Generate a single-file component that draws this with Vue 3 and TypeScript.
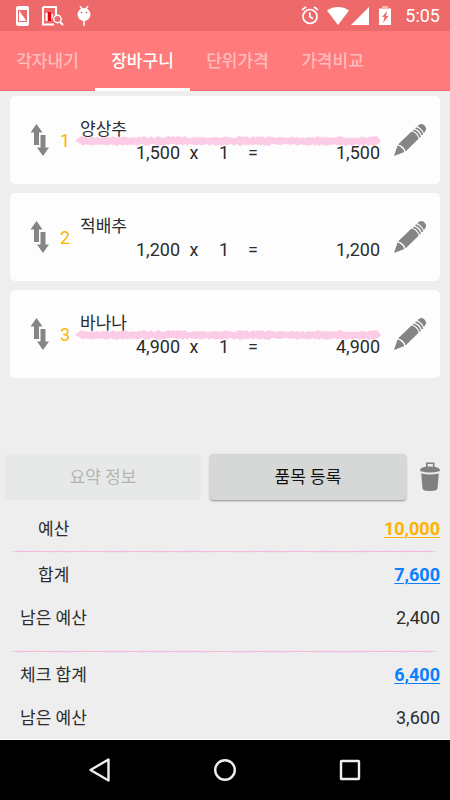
<script setup lang="ts">
import { computed, ref } from 'vue'

interface Item {
  name: string
  price: number
  quantity: number
  checked: boolean
}

interface SummaryRow {
  label: string
  amount: number
  tone?: 'budget' | 'total'
  indented?: boolean
}

const tabs: string[] = ['각자내기', '장바구니', '단위가격', '가격비교']
const activeTab = ref('장바구니')

const items = ref<Item[]>([
  { name: '양상추', price: 1500, quantity: 1, checked: true },
  { name: '적배추', price: 1200, quantity: 1, checked: false },
  { name: '바나나', price: 4900, quantity: 1, checked: true },
])

const budget = 10000
const sum = (list: Item[]): number => list.reduce((acc, i) => acc + i.price * i.quantity, 0)
const total = computed(() => sum(items.value))
const checkedTotal = computed(() => sum(items.value.filter((i) => i.checked)))

const groups = computed<SummaryRow[][]>(() => [
  [{ label: '예산', amount: budget, tone: 'budget', indented: true }],
  [
    { label: '합계', amount: total.value, tone: 'total', indented: true },
    { label: '남은 예산', amount: budget - total.value },
  ],
  [
    { label: '체크 합계', amount: checkedTotal.value, tone: 'total' },
    { label: '남은 예산', amount: budget - checkedTotal.value },
  ],
])

const format = (n: number): string => n.toLocaleString('en-US')

// Ragged outline of a crayon stroke, built from a repeatable pseudo-random sequence.
function crayonPath(length: number, top: number, bottom: number, rough: number, step: number): string {
  let seed = 7
  const next = (): number => {
    seed = (seed * 16807) % 2147483647
    return seed / 2147483647
  }
  const middle = (top + bottom) / 2
  const upper: string[] = []
  const lower: string[] = []
  for (let x = 6; x < length - 2; x += step) {
    upper.push(`${x} ${(top + next() * rough).toFixed(1)}`)
    lower.unshift(`${x} ${(bottom - next() * rough).toFixed(1)}`)
  }
  return `M0 ${middle}L${upper.join('L')}L${length} ${middle}L${lower.join('L')}Z`
}

const strike = crayonPath(306, 0, 10, 2.2, 1.5)
const rule = crayonPath(426, 0.7, 2.3, 0.3, 6)
</script>

<template>
  <div class="screen">
    <header class="status">
      <div class="status-group">
        <svg class="ico-phone" width="13" height="20" viewBox="0 0 13 20" aria-hidden="true">
          <rect width="13" height="20" rx="2" fill="#fff" />
          <rect x="2" y="4" width="9" height="12" fill="#ee6a6a" />
          <path d="M3 4.500V15h7.500Z" fill="#fff" />
        </svg>
        <svg class="ico-chart" width="22" height="20" viewBox="0 0 22 20" aria-hidden="true">
          <path d="M1 1h13v9M12 18.500H1V1" fill="none" stroke="#fff" stroke-width="2" />
          <path d="M3.500 7h2v8h-2zM9.500 8h1.500v3l-1.500 3z" fill="#fff" />
          <path d="M6 6h3v9H6z" fill="#e60012" />
          <circle cx="15.500" cy="13" r="3.700" fill="#ee6a6a" stroke="#fff" stroke-width="1.400" />
          <path d="m18 16 3 3" stroke="#fff" stroke-width="2" />
        </svg>
        <svg class="ico-droid" width="14" height="20" viewBox="0 0 14 20" aria-hidden="true">
          <path d="M3 0l2 3M11 0 9 3M7 14v6" stroke="#fff" stroke-width="1.500" />
          <circle cx="7" cy="8.500" r="6.500" fill="#fff" />
          <circle cx="4.500" cy="6.500" r="0.800" fill="#c44" />
          <circle cx="9.500" cy="6.500" r="0.800" fill="#c44" />
        </svg>
      </div>
      <div class="status-group">
        <svg class="ico-alarm" width="18" height="19" viewBox="0 0 18 19" aria-hidden="true">
          <g fill="none" stroke="#fff" stroke-width="1.700">
            <circle cx="9" cy="10.500" r="7" />
            <path d="M8.800 6.500v4.300l3.200 2M1 4l4-3.200M17 4l-4-3.200" />
          </g>
        </svg>
        <svg class="ico-wifi" width="22" height="18" viewBox="0 0 22 18" aria-hidden="true">
          <path d="M0 3.500C6.500-1.100 15.500-1.100 22 3.500L11 18Z" fill="#fff" />
        </svg>
        <svg class="ico-signal" width="18" height="18" viewBox="0 0 18 18" aria-hidden="true">
          <path d="M0 18 18 0v18Z" fill="#fff" />
        </svg>
        <svg class="ico-battery" width="12" height="19" viewBox="0 0 12 19" aria-hidden="true">
          <path d="M3 0h6v2h3v4H0V2h3z" fill="#fff" opacity="0.500" />
          <path d="M0 3h12v16H0z" fill="#fff" />
          <path d="M8 5 3 11h2.500L4 17l5.500-7H7Z" fill="#ee6a6a" />
        </svg>
        <time class="clock">5:05</time>
      </div>
    </header>

    <nav class="tabs">
      <button
        v-for="tab in tabs"
        :key="tab"
        type="button"
        class="tab"
        :class="{ active: tab === activeTab }"
        @click="activeTab = tab"
      >{{ tab }}</button>
    </nav>

    <main class="content">
      <ul class="list">
        <li v-for="(item, index) in items" :key="item.name" class="card">
          <button type="button" class="icon-button" aria-label="순서 변경">
            <svg width="20" height="34" viewBox="0 0 20 34" fill="#858585" aria-hidden="true">
              <path d="M6.500 1 12.500 9.500H9V22H4V9.500H.5Z" />
              <path d="M10.500 12h5v12.500h3.500L13 33 7 24.500h3.500Z" />
            </svg>
          </button>
          <span class="order">{{ index + 1 }}</span>
          <div class="details">
            <span class="name">{{ item.name }}</span>
            <div class="amounts">
              <span class="right">{{ format(item.price) }}</span>
              <span>x</span>
              <span>{{ item.quantity }}</span>
              <span>=</span>
              <span class="right">{{ format(item.price * item.quantity) }}</span>
            </div>
            <svg v-if="item.checked" class="strike" viewBox="0 0 306 10" preserveAspectRatio="none" aria-hidden="true">
              <path :d="strike" fill="#fccbe5" />
            </svg>
          </div>
          <button type="button" class="icon-button" aria-label="수정">
            <svg width="34" height="34" viewBox="0 0 34 34" aria-hidden="true">
              <g fill="#858585">
                <path d="M1 33 4.500 22.500C7.500 23 10.700 26.200 11.500 29Z" />
                <path d="M5 21.500 18.500 8.500C22 9.300 25 12.400 25.600 15.700L12.500 28.600C11.500 25.300 8.500 22.300 5 21.500Z" />
                <path d="M24.500 3.300C26.500 1 29 .2 31 2L32.200 3.500C34 5.800 32.800 8 30.800 10 29.500 7 27.500 4.500 24.500 3.300Z" />
              </g>
              <g fill="none" stroke="#858585" stroke-width="1.800">
                <path d="M20.300 7.300C23.800 8.200 26.300 10.800 27.100 14.200" />
                <path d="M22.600 5.100C26.100 6 28.600 8.600 29.400 12" />
              </g>
              <path d="M5 22C8.500 22.800 11.200 25.700 12 28.800" fill="none" stroke="#fdfdfd" stroke-width="1.200" />
            </svg>
          </button>
        </li>
      </ul>

      <div class="actions">
        <button type="button" class="action" disabled>요약 정보</button>
        <button type="button" class="action raised">품목 등록</button>
        <button type="button" class="icon-button trash" aria-label="삭제">
          <svg width="20" height="30" viewBox="0 0 20 30" aria-hidden="true">
            <path d="M6.800 5V1.200h6.900V5" fill="none" stroke="#808080" stroke-width="1.600" />
            <path d="M0 9C0 5.500 4 4.500 10 4.500S20 5.500 20 9Q10 12 0 9Z" fill="#808080" />
            <path d="M1.200 11.500Q10 13.500 18.800 11.500L17.500 26.500Q17.300 29 10 29T2.500 26.500Z" fill="#808080" />
          </svg>
        </button>
      </div>

      <section class="summary">
        <template v-for="(group, g) in groups" :key="g">
          <svg v-if="g > 0" class="rule" viewBox="0 0 426 3" preserveAspectRatio="none" aria-hidden="true">
            <path :d="rule" fill="#f4bbdc" />
          </svg>
          <dl class="group">
            <div v-for="row in group" :key="row.label" class="row" :class="{ indented: row.indented }">
              <dt>{{ row.label }}</dt>
              <dd>
                <a v-if="row.tone" href="#" :class="row.tone">{{ format(row.amount) }}</a>
                <template v-else>{{ format(row.amount) }}</template>
              </dd>
            </div>
          </dl>
        </template>
      </section>
    </main>

    <footer class="navbar">
      <button type="button" class="icon-button" aria-label="뒤로">
        <svg width="24" height="26" viewBox="0 0 24 26" aria-hidden="true">
          <path d="M20.500 2.500v21L2.500 13Z" fill="none" stroke="#eee" stroke-width="2.400" stroke-linejoin="round" />
        </svg>
      </button>
      <button type="button" class="icon-button" aria-label="홈">
        <svg width="24" height="24" viewBox="0 0 24 24" aria-hidden="true">
          <circle cx="12" cy="12" r="9.800" fill="none" stroke="#eee" stroke-width="2.400" />
        </svg>
      </button>
      <button type="button" class="icon-button" aria-label="최근 앱">
        <svg width="24" height="24" viewBox="0 0 24 24" aria-hidden="true">
          <rect x="3" y="3" width="18" height="18" rx="0.500" fill="none" stroke="#eee" stroke-width="2.400" />
        </svg>
      </button>
    </footer>
  </div>
</template>

<style>
body {
  margin: 0;
  background: #eee;
}
</style>

<style scoped>
.screen {
  display: flex;
  flex-direction: column;
  min-height: 100vh;
  background: #eee;
  color: #2c2c2c;
  font-family: Roboto, "Noto Sans CJK KR", sans-serif;
  font-size: 18px;
  line-height: 24px;
}

button {
  margin: 0;
  padding: 0;
  border: 0;
  background: none;
  color: inherit;
  font: inherit;
  cursor: pointer;
}

svg {
  display: block;
}

.status {
  display: flex;
  align-items: center;
  justify-content: space-between;
  box-sizing: border-box;
  height: 31px;
  padding: 0 10px 0 16px;
  background: #ee6a6a;
}

.status-group {
  display: flex;
  align-items: center;
}

.ico-chart,
.ico-droid {
  margin-left: 13px;
}

.ico-wifi {
  margin-left: 8px;
}

.ico-signal {
  margin-left: 2px;
}

.ico-battery {
  margin-left: 10px;
}

.clock {
  margin-left: 14px;
  color: #fff;
  font-weight: 400;
}

.tabs {
  display: flex;
  box-sizing: border-box;
  height: 60px;
  background: #ff7a7a;
  box-shadow: inset 0 -1px #ff6b6b;
}

.tab {
  flex: 0 0 95px;
  border-top: 3px solid transparent;
  border-bottom: 3px solid transparent;
  color: rgba(255, 255, 255, 0.5);
  font-size: 17px;
  font-weight: 500;
  white-space: nowrap;
}

.tab.active {
  border-bottom-color: #fff;
  color: #fff;
}

.content {
  display: flex;
  flex: 1;
  flex-direction: column;
  border-bottom: 1px solid #fff;
}

.list {
  display: flex;
  flex: 1;
  flex-direction: column;
  gap: 9px;
  margin: 0;
  padding: 5px 10px;
  list-style: none;
}

.card {
  display: flex;
  align-items: center;
  box-sizing: border-box;
  height: 88px;
  padding: 0 13px 0 20px;
  border-radius: 5px;
  background: #fdfdfd;
}

.icon-button {
  display: flex;
  align-items: center;
  justify-content: center;
}

.order {
  width: 20px;
  margin-left: 10px;
  padding-top: 2px;
  color: #ffb300;
}

.details {
  position: relative;
  flex: 1;
  margin-right: 13px;
  padding-top: 2px;
}

.name {
  display: block;
  font-size: 17px;
}

.amounts {
  display: grid;
  grid-template-columns: 100px 28px 32px 26px 1fr;
  text-align: center;
}

.right {
  text-align: right;
}

.strike {
  position: absolute;
  top: 21px;
  left: -5px;
  width: calc(100% + 6px);
  height: 10px;
}

.actions {
  display: flex;
  align-items: center;
  gap: 9px;
  padding: 0 10px 7px 5px;
}

.action {
  flex: 1;
  height: 46px;
  border-radius: 3px;
  background: #d6d8d7;
  color: #111;
  font-size: 17px;
}

.action:disabled {
  background: #e7e9e8;
  color: #b4b5b4;
  cursor: default;
}

.raised {
  box-shadow: 0 1px 2px rgba(0, 0, 0, 0.4);
}

.trash {
  margin-left: 5px;
}

.rule {
  width: calc(100% - 24px);
  height: 3px;
  margin-left: 11px;
}

.group {
  margin: 0;
}

.group:nth-of-type(2) {
  padding-bottom: 11px;
}

.row {
  display: flex;
  align-items: center;
  justify-content: space-between;
  height: 43px;
  padding: 0 10px 0 20px;
}

.row.indented {
  padding-left: 38px;
}

.row dt {
  font-size: 17px;
}

.row dd {
  margin: 0;
}

.row a {
  font-weight: 700;
  text-decoration: underline;
  text-decoration-thickness: 1px;
  text-underline-offset: 2px;
}

.row .budget {
  color: #ffb300;
}

.row .total {
  color: #0a80ff;
}

.navbar {
  display: flex;
  align-items: center;
  justify-content: center;
  gap: 101px;
  height: 60px;
  background: #000;
}
</style>
